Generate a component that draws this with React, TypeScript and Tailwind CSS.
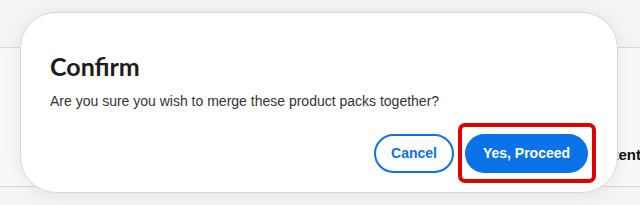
export default function App() {
  return (
    <div className="relative h-[205px] w-[640px] overflow-hidden bg-[#f4f4f4] font-['Liberation_Sans',Arial,sans-serif]">
      {/* page behind the modal */}
      <div className="mt-[47px] h-[140px] border-y border-[#d9d9d9] bg-[#f8f8f8]">
        <div className="flex justify-end pt-[97px]">
          <span className="mr-[-1px] text-[15px] font-bold leading-[20px] text-[#111]">Content</span>
        </div>
      </div>

      {/* modal */}
      <div className="absolute left-[20px] top-[12px] flex h-[181px] w-[598px] flex-col rounded-[36px] border border-[#d8d8d8] bg-white px-[29px] pt-[39px] shadow-[0_2px_18px_rgba(0,0,0,0.07)]">
        <h2 className="font-['Lato',sans-serif] text-[25px] font-bold leading-[28px] text-[#1c1c1c]">Confirm</h2>
        <p className="mt-[11px] text-[14px] leading-[20px] text-[#333]">
          Are you sure you wish to merge these product packs together?
        </p>
        <div className="mt-[23px] flex justify-end gap-[11px]">
          <button className="h-[39px] w-[80px] rounded-full border-2 border-[#0b72e7] bg-white text-[14px] font-bold text-[#0b72e7]">
            Cancel
          </button>
          <div className="relative">
            <button className="h-[39px] w-[123px] rounded-full bg-[#0b72e7] text-[14px] font-bold text-white">
              Yes, Proceed
            </button>
            <div className="pointer-events-none absolute bottom-[-10px] left-[-7px] right-[-8px] top-[-11px] rounded-[7px] border-4 border-[#e30000]" />
          </div>
        </div>
      </div>
    </div>
  );
}
